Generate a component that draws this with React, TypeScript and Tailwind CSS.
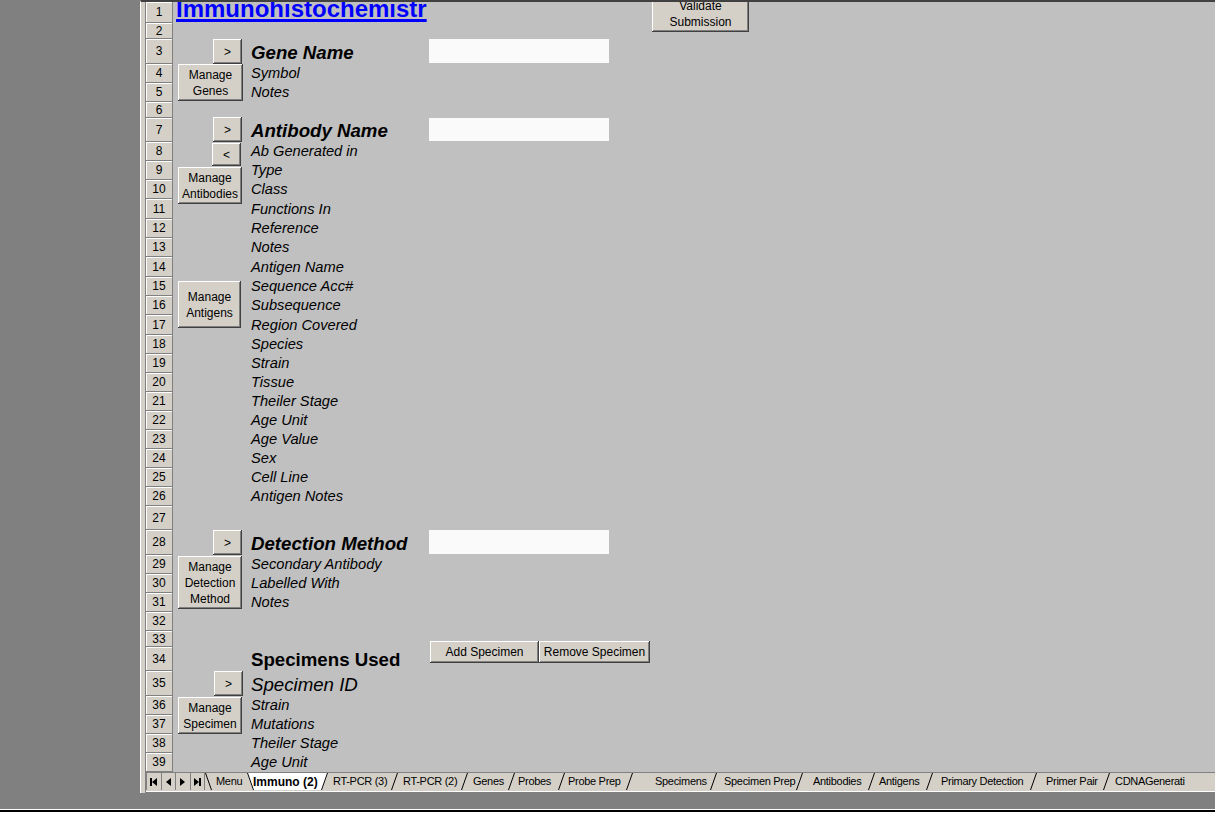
import React from 'react';

type Kind = 'label' | 'head' | 'bold' | 'big';
type Row = { n: number; h: string; text?: string; kind?: Kind; input?: boolean };

const rows: Row[] = [
  { n: 1, h: 'h-[21px]' },
  { n: 2, h: 'h-[16px]' },
  { n: 3, h: 'h-[25px]', text: 'Gene Name', kind: 'head', input: true },
  { n: 4, h: 'h-[19px]', text: 'Symbol' },
  { n: 5, h: 'h-[19px]', text: 'Notes' },
  { n: 6, h: 'h-[16px]' },
  { n: 7, h: 'h-[24px]', text: 'Antibody Name', kind: 'head', input: true },
  { n: 8, h: 'h-[19px]', text: 'Ab Generated in' },
  { n: 9, h: 'h-[19px]', text: 'Type' },
  { n: 10, h: 'h-[19px]', text: 'Class' },
  { n: 11, h: 'h-[20px]', text: 'Functions In' },
  { n: 12, h: 'h-[19px]', text: 'Reference' },
  { n: 13, h: 'h-[19px]', text: 'Notes' },
  { n: 14, h: 'h-[20px]', text: 'Antigen Name' },
  { n: 15, h: 'h-[19px]', text: 'Sequence Acc#' },
  { n: 16, h: 'h-[19px]', text: 'Subsequence' },
  { n: 17, h: 'h-[20px]', text: 'Region Covered' },
  { n: 18, h: 'h-[19px]', text: 'Species' },
  { n: 19, h: 'h-[19px]', text: 'Strain' },
  { n: 20, h: 'h-[19px]', text: 'Tissue' },
  { n: 21, h: 'h-[19px]', text: 'Theiler Stage' },
  { n: 22, h: 'h-[19px]', text: 'Age Unit' },
  { n: 23, h: 'h-[19px]', text: 'Age Value' },
  { n: 24, h: 'h-[19px]', text: 'Sex' },
  { n: 25, h: 'h-[19px]', text: 'Cell Line' },
  { n: 26, h: 'h-[19px]', text: 'Antigen Notes' },
  { n: 27, h: 'h-[24px]' },
  { n: 28, h: 'h-[25px]', text: 'Detection Method', kind: 'head', input: true },
  { n: 29, h: 'h-[19px]', text: 'Secondary Antibody' },
  { n: 30, h: 'h-[19px]', text: 'Labelled With' },
  { n: 31, h: 'h-[19px]', text: 'Notes' },
  { n: 32, h: 'h-[19px]' },
  { n: 33, h: 'h-[16px]' },
  { n: 34, h: 'h-[24px]', text: 'Specimens Used', kind: 'bold' },
  { n: 35, h: 'h-[25px]', text: 'Specimen ID', kind: 'big' },
  { n: 36, h: 'h-[19px]', text: 'Strain' },
  { n: 37, h: 'h-[19px]', text: 'Mutations' },
  { n: 38, h: 'h-[19px]', text: 'Theiler Stage' },
  { n: 39, h: 'h-[19px]', text: 'Age Unit' },
];

const kindClass: Record<Kind, string> = {
  label: 'italic text-[14.67px] leading-[17px] pb-[1px]',
  head: 'italic font-bold text-[18.67px] leading-[21px] pb-[1px]',
  bold: 'font-bold text-[18.67px] leading-[21px] pb-[1px]',
  big: 'italic text-[18.67px] leading-[21px] pb-[1px]',
};

const buttons = [
  { label: ['>'], pos: 'left-[67px] top-[37px] w-[29px] h-[25px]' },
  { label: ['Manage', 'Genes'], pos: 'left-[32px] top-[62px] w-[65px] h-[37px]' },
  { label: ['>'], pos: 'left-[67px] top-[115px] w-[29px] h-[25px]' },
  { label: ['<'], pos: 'left-[66px] top-[141px] w-[29px] h-[23px]' },
  { label: ['Manage', 'Antibodies'], pos: 'left-[32px] top-[165px] w-[64px] h-[37px]' },
  { label: ['Manage', 'Antigens'], pos: 'left-[32px] top-[279px] w-[63px] h-[47px]' },
  { label: ['>'], pos: 'left-[67px] top-[528px] w-[29px] h-[25px]' },
  { label: ['Manage', 'Detection', 'Method'], pos: 'left-[32px] top-[554px] w-[64px] h-[53px]' },
  { label: ['>'], pos: 'left-[68px] top-[669px] w-[29px] h-[25px]' },
  { label: ['Manage', 'Specimen'], pos: 'left-[32px] top-[695px] w-[64px] h-[37px]' },
  { label: ['Add Specimen'], pos: 'left-[284px] top-[639px] w-[109px] h-[22px]' },
  { label: ['Remove Specimen'], pos: 'left-[393px] top-[639px] w-[111px] h-[22px]' },
  { label: ['Validate', 'Submission'], pos: 'left-[506px] top-[-7px] w-[97px] h-[37px]' },
];

const tabs = [
  { name: 'Menu', w: 'w-[42px]', pl: 'pl-[11px]' },
  { name: 'Immuno (2)', w: 'w-[81px]', pl: 'pl-[6px]', active: true },
  { name: 'RT-PCR (3)', w: 'w-[70px]', pl: 'pl-[5px]' },
  { name: 'RT-PCR (2)', w: 'w-[70px]', pl: 'pl-[5px]' },
  { name: 'Genes', w: 'w-[47px]', pl: 'pl-[5px]' },
  { name: 'Probes', w: 'w-[50px]', pl: 'pl-[3px]' },
  { name: 'Probe Prep', w: 'w-[68px]', pl: 'pl-[3px]' },
  { name: 'Specimens', w: 'w-[84px]', pl: 'pl-[22px]' },
  { name: 'Specimen Prep', w: 'w-[86px]', pl: 'pl-[7px]' },
  { name: 'Antibodies', w: 'w-[72px]', pl: 'pl-[10px]' },
  { name: 'Antigens', w: 'w-[58px]', pl: 'pl-[4px]' },
  { name: 'Primary Detection', w: 'w-[104px]', pl: 'pl-[8px]' },
  { name: 'Primer Pair', w: 'w-[73px]', pl: 'pl-[9px]' },
  { name: 'CDNAGenerati', w: 'w-[110px]', pl: 'pl-[5px]' },
];

function SheetButton({ label, pos }: { label: string[]; pos: string }) {
  return (
    <div
      className={`absolute ${pos} bg-[#d4d0c8] flex flex-col items-center justify-center text-[12px] leading-[16px] text-black shadow-[inset_-1px_-1px_#404040,inset_1px_1px_#ffffff,inset_-2px_-2px_#808080]`}
    >
      {label.map((l) => (
        <span key={l} className="whitespace-nowrap">
          {l}
        </span>
      ))}
    </div>
  );
}

function NavButton({ dir }: { dir: 'first' | 'prev' | 'next' | 'last' }) {
  return (
    <div className="w-[15px] h-full flex items-center justify-center border-r border-[#808080]">
      <svg width="9" height="10" viewBox="0 0 9 10">
        {dir === 'first' && (
          <>
            <rect x="1" y="1" width="2" height="8" fill="#000" />
            <polygon points="8,1 3,5 8,9" fill="#000" />
          </>
        )}
        {dir === 'prev' && <polygon points="7,1 2,5 7,9" fill="#000" />}
        {dir === 'next' && <polygon points="2,1 7,5 2,9" fill="#000" />}
        {dir === 'last' && (
          <>
            <polygon points="1,1 6,5 1,9" fill="#000" />
            <rect x="6" y="1" width="2" height="8" fill="#000" />
          </>
        )}
      </svg>
    </div>
  );
}

function Slash({ side, back }: { side: 'left' | 'right'; back?: boolean }) {
  return (
    <svg
      className={`absolute top-0 ${side === 'left' ? 'left-0' : 'right-0'} w-[7px] h-[17px]`}
      viewBox="0 0 7 17"
    >
      {back ? (
        <line x1="0.5" y1="0" x2="6.5" y2="17" stroke="#000" strokeWidth="1" />
      ) : (
        <line x1="0.5" y1="17" x2="6.5" y2="0" stroke="#000" strokeWidth="1" />
      )}
    </svg>
  );
}

export default function App() {
  return (
    <div className="w-[1215px] h-[815px] bg-[#808080] flex flex-col overflow-hidden font-['Liberation_Sans',Arial,sans-serif] text-black">
      <div className="flex h-[793px] shrink-0">
        <div className="w-[140px] shrink-0 bg-[#808080]" />
        <div className="flex-1 flex flex-col border-l border-white border-r border-r-black border-t-2 border-t-[#404040]">
          <div className="flex flex-1">
            {/* frame strip left of the row numbers */}
            <div className="w-[5px] shrink-0 bg-[#d4d0c8] border-r border-[#808080]" />
            <div className="flex-1 flex flex-col min-w-0">
              <div className="relative h-[770px] overflow-hidden bg-[#c0c0c0]">
                {rows.map((r) => (
                  <div key={r.n} className={`flex ${r.h}`}>
                    <div className="w-[27px] shrink-0 bg-[#d4d0c8] border-r border-b border-[#808080] shadow-[inset_1px_1px_#ffffff] flex items-center justify-center text-[12px] leading-none">
                      {r.n}
                    </div>
                    {r.n === 1 ? (
                      <div className="flex-1 pl-[3px]">
                        <span className="block mt-[-5px] text-[24px] leading-[24px] font-bold text-[#0000ff] underline decoration-[3px] underline-offset-[2px] whitespace-nowrap">
                          Immunohistochemistr
                        </span>
                      </div>
                    ) : (
                      <>
                        <div className="w-[76px] shrink-0" />
                        <div className="w-[180px] shrink-0 flex items-end pl-[2px] whitespace-nowrap">
                          {r.text && <span className={kindClass[r.kind ?? 'label']}>{r.text}</span>}
                        </div>
                        {r.input && <div className="w-[180px] shrink-0 mb-[1px] bg-[#fafafa]" />}
                      </>
                    )}
                  </div>
                ))}
                {buttons.map((b, i) => (
                  <SheetButton key={i} label={b.label} pos={b.pos} />
                ))}
              </div>

              {/* sheet tabs */}
              <div className="h-[19px] flex bg-[#d4d0c8] border-t border-[#808080] leading-none overflow-hidden">
                <div className="flex h-[17px] w-[59px] shrink-0 border-l border-[#808080]">
                  <NavButton dir="first" />
                  <NavButton dir="prev" />
                  <NavButton dir="next" />
                  <NavButton dir="last" />
                </div>
                {tabs.map((t, i) => (
                  <div
                    key={t.name}
                    className={`relative h-[17px] shrink-0 ${t.w} ${t.pl} flex items-center whitespace-nowrap ${
                      t.active ? 'font-bold text-[12px]' : 'text-[11px] tracking-[-0.3px]'
                    }`}
                  >
                    {t.active && (
                      <div className="absolute inset-0 bg-white [clip-path:polygon(0_0,100%_0,calc(100%-6px)_100%,6px_100%)]" />
                    )}
                    {i === 0 && <Slash side="left" back />}
                    {t.active && <Slash side="left" back />}
                    {i > 0 && i < tabs.length - 1 && <Slash side="right" />}
                    <span className="relative">{t.name}</span>
                  </div>
                ))}
              </div>
              <div className="h-[1px] bg-white" />
            </div>
          </div>
        </div>
        <div className="w-[2px] shrink-0 bg-white" />
      </div>
      <div className="h-[16px] shrink-0 bg-[#808080]" />
      <div className="h-[1px] shrink-0 bg-white" />
      <div className="h-[2px] shrink-0 bg-black" />
      <div className="flex-1 bg-white" />
    </div>
  );
}
